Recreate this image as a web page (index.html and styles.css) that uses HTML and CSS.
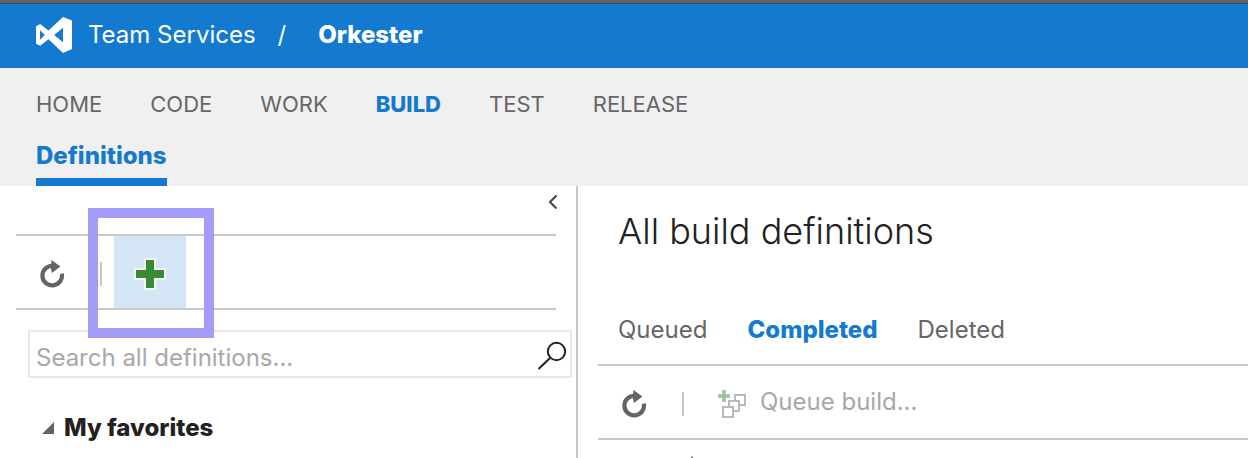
FILE: index.html
```html
<!DOCTYPE html>
<html lang="en">
<head>
<meta charset="utf-8">
<title>Build definitions - Team Services</title>
<link rel="stylesheet" href="styles.css">
</head>
<body>
<svg class="sprite" aria-hidden="true">
  <symbol id="refresh" viewBox="0 0 28 28">
    <path d="M23.8 13.6 A9.8 9.8 0 1 1 14.5 5.8" fill="none" stroke="#646464" stroke-width="4.2"/>
    <path d="M13.4 0 L22.4 6.4 L14 13 L13 9 Z" fill="#646464"/>
  </symbol>
</svg>
<header class="topbar">
  <a class="brand" href="#">
    <svg class="logo" viewBox="0 0 36 36" aria-hidden="true"><path fill="#fff" fill-rule="evenodd" d="M27 0 L36 3.5 V32 L27 36 L12.5 22.2 L4.2 28.8 L0 26.7 V9.3 L4.2 7 L12.5 13.6 Z M27 10.8 L18.2 18 L27 25.2 Z M4 13.2 V22.8 L8.8 18 Z"/></svg>
    <span>Team Services</span>
  </a>
  <span class="slash">/</span>
  <a class="project" href="#">Orkester</a>
</header>
<div class="hubs">
  <nav class="hub-list" aria-label="Hubs">
    <a href="#">HOME</a>
    <a href="#">CODE</a>
    <a href="#">WORK</a>
    <a class="active" href="#">BUILD</a>
    <a href="#">TEST</a>
    <a href="#">RELEASE</a>
  </nav>
  <nav class="sub-hubs" aria-label="Build">
    <a href="#">Definitions</a>
  </nav>
</div>
<div class="workspace">
  <aside class="sidebar">
    <div class="collapse-row">
      <button class="collapse" aria-label="Collapse"><svg viewBox="0 0 10 16" aria-hidden="true"><path d="M8.5 1.5 L2 8 L8.5 14.5" fill="none" stroke="#444" stroke-width="2"/></svg></button>
    </div>
    <div class="toolbar side-tools">
      <button class="tool" aria-label="Refresh"><svg class="icon"><use href="#refresh"/></svg></button>
      <span class="divider"></span>
      <div class="add-wrap">
        <button class="add" aria-label="New definition"><svg viewBox="0 0 32 32" aria-hidden="true"><path d="M11 1 H21 V11 H31 V21 H21 V31 H11 V21 H1 V11 H11 Z" fill="#388a34" stroke="#f2f5f3" stroke-width="2"/></svg></button>
        <span class="highlight"></span>
      </div>
    </div>
    <form class="search">
      <input type="text" aria-label="Search all definitions" placeholder="Search all definitions...">
      <button type="button" aria-label="Search"><svg viewBox="0 0 30 30" aria-hidden="true"><g fill="none" stroke="#222" stroke-width="2"><circle cx="19.5" cy="10.5" r="8.7"/><path d="M13.3 16.7 L1.5 28"/></g></svg></button>
    </form>
    <button class="group"><svg viewBox="0 0 12 12" aria-hidden="true"><path d="M12 0 V12 H0 Z" fill="#646464"/></svg>My favorites</button>
  </aside>
  <main class="content">
    <h1>All build definitions</h1>
    <nav class="tabs" aria-label="Views">
      <a href="#">Queued</a>
      <a class="active" href="#">Completed</a>
      <a href="#">Deleted</a>
    </nav>
    <div class="toolbar main-tools">
      <button class="tool" aria-label="Refresh"><svg class="icon"><use href="#refresh"/></svg></button>
      <span class="divider"></span>
      <button class="queue" disabled>
        <svg class="icon" viewBox="0 0 28 28" aria-hidden="true"><g fill="#fff" stroke="#b9b9b9" stroke-width="2"><path d="M17 5 H27 V15 H17 Z"/><path d="M11 11 H21 V21 H11 Z"/><path d="M5 17 H15 V27 H5 Z"/></g><path d="M4.2 0 H7.8 V4.2 H12 V7.8 H7.8 V12 H4.2 V7.8 H0 V4.2 H4.2 Z" fill="#9bc49a"/></svg>
        <span>Queue build...</span>
      </button>
    </div>
    <svg class="sort" viewBox="0 0 12 10" aria-hidden="true"><path d="M6 0 L12 10 H0 Z" fill="#555"/></svg>
  </main>
</div>
</body>
</html>
```
FILE: styles.css
```css
* { box-sizing: border-box; }
body {
  margin: 0;
  height: 100vh;
  display: flex;
  flex-direction: column;
  overflow: hidden;
  background: #fff;
  color: #222;
  font: 24px/32px Inter, "Liberation Sans", sans-serif;
}
a { color: inherit; text-decoration: none; }
button {
  padding: 0;
  border: 0;
  background: none;
  color: inherit;
  font: inherit;
}
svg { display: block; }
.sprite { position: absolute; width: 0; height: 0; }
.icon { width: 28px; height: 28px; }

.topbar {
  display: flex;
  align-items: center;
  flex: none;
  height: 68px;
  padding: 0 36px 2px;
  border-top: 3px solid #646464;
  background: #147acf;
  box-shadow: inset 0 1px #3c4a58;
  color: #fff;
}
.brand { display: flex; align-items: center; gap: 16px; }
.logo { width: 36px; height: 36px; }
.slash { margin: 0 32px 0 22px; }
.project { font-weight: 800; }

.hubs {
  flex: none;
  padding: 20px 36px 0;
  background: #f0f0f0;
  color: #666;
}
.hub-list { display: flex; gap: 48px; font-size: 22px; }
.active, .sub-hubs { color: #147acf; font-weight: 800; }
.sub-hubs { display: flex; margin-top: 20px; }
.sub-hubs a { padding-bottom: 6px; border-bottom: 8px solid #147acf; }

.workspace { display: flex; flex: 1; min-height: 0; }
.sidebar { flex: none; width: 578px; border-right: 2px solid #c8c8c8; }
.collapse-row { display: flex; justify-content: flex-end; height: 48px; padding: 8px 18px; }
.collapse svg { width: 10px; height: 16px; }
.collapse { align-self: flex-start; }
.toolbar {
  display: flex;
  align-items: center;
  height: 76px;
  border: solid #c8c8c8;
  border-width: 2px 0;
}
.tool { padding-top: 4px; }
.divider { width: 2px; height: 24px; background: #c8c8c8; }
.main-tools .divider { margin: 4px 34px 0; }
.side-tools { margin: 0 20px 0 16px; padding-left: 22px; }
.side-tools .divider { margin: 4px 12px 0 34px; }
.add-wrap { position: relative; }
.add { display: grid; place-items: center; width: 72px; height: 72px; padding-top: 4px; background: #d4e5f5; }
.add svg { width: 32px; height: 32px; }
.highlight {
  position: absolute;
  inset: -28px -28px -30px -26px;
  border: 10px solid #a59cf9;
  pointer-events: none;
}
.search {
  display: flex;
  align-items: center;
  height: 48px;
  margin: 20px 4px 0 28px;
  padding: 4px 3px 0 6px;
  border: 2px solid #e6e6e6;
}
.search input {
  flex: 1;
  min-width: 0;
  padding: 4px 0 0;
  border: 0;
  outline: 0;
  background: none;
  color: #222;
  font: inherit;
}
.search input::placeholder { color: #a8a8a8; opacity: 1; }
.search svg { width: 30px; height: 30px; }
.group { display: flex; align-items: center; gap: 10px; margin: 34px 0 0 42px; font-weight: 800; }
.group svg { width: 12px; height: 12px; }

.content { flex: 1; min-width: 0; padding-left: 20px; }
h1 { margin: 21px 20px 0; font-size: 36px; line-height: 48px; font-weight: 300; }
.tabs { display: flex; gap: 40px; padding: 59px 20px 18px; color: #666; }
.main-tools { padding-left: 22px; }
.queue { display: flex; align-items: center; gap: 14px; color: #a8a8a8; }
.queue svg { margin-top: 4px; }
.sort { width: 12px; height: 10px; margin: 16px 0 0 88px; }
```
